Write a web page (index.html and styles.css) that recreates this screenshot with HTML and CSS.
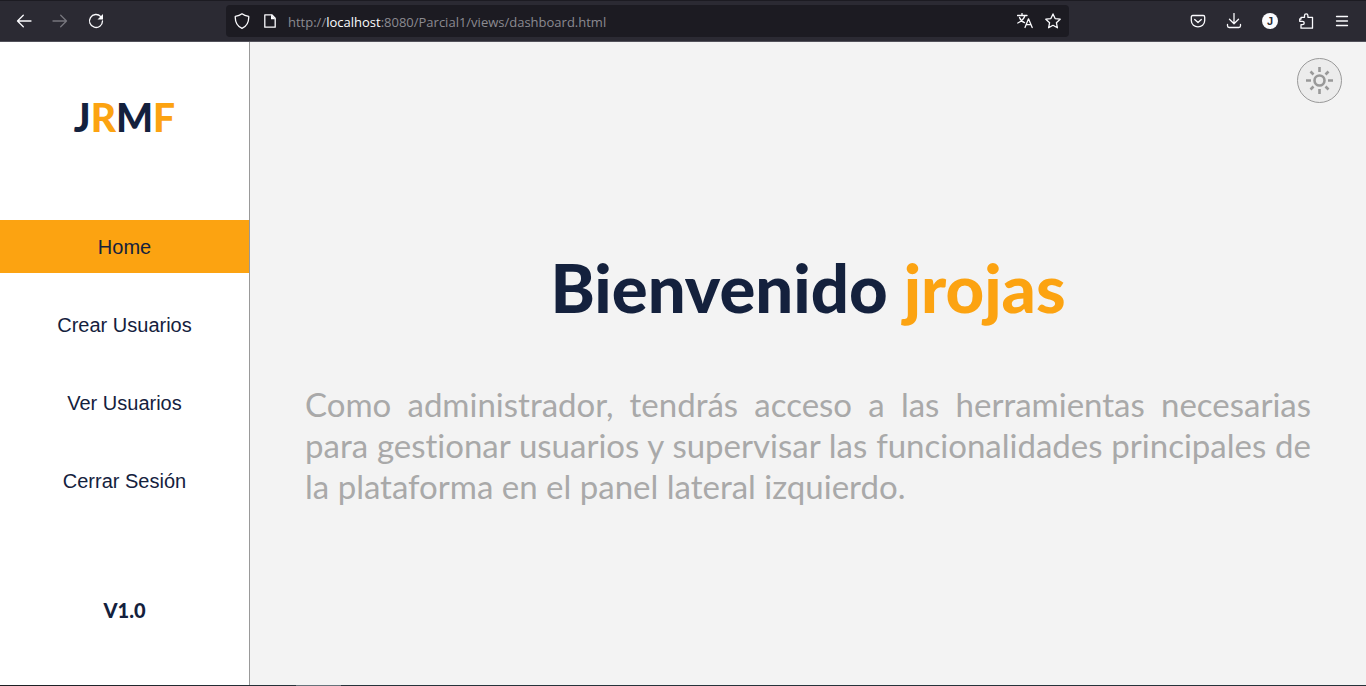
FILE: index.html
```html
<!DOCTYPE html>
<html lang="es">
<head>
<meta charset="utf-8">
<meta name="viewport" content="width=device-width, initial-scale=1">
<title>Dashboard</title>
<link rel="stylesheet" href="styles.css">
</head>
<body>
<header class="toolbar">
  <div class="toolbar-group nav-buttons">
    <button class="tool" type="button" aria-label="Atrás"><svg viewBox="0 0 16 16"><path d="M15 8H1.5M7.300 2.200 1.500 8l5.800 5.800"/></svg></button>
    <button class="tool tool-disabled" type="button" aria-label="Adelante" disabled><svg viewBox="0 0 16 16"><path d="M1 8h13.500M8.700 2.200 14.500 8l-5.800 5.800"/></svg></button>
    <button class="tool" type="button" aria-label="Recargar"><svg viewBox="0 0 16 16"><path d="M12.800 3.600A6.500 6.500 0 1 0 14.500 8"/><path class="solid" d="M15 1v5.500H9.500z"/></svg></button>
  </div>
  <div class="address">
    <button class="tool" type="button" aria-label="Protección"><svg viewBox="0 0 16 16"><path d="M8 .8C6 2.400 3.800 3 1.300 3.300 1 8.500 3 13 8 15.300c5-2.300 7-6.800 6.700-12C12.200 3 10 2.400 8 .8z"/></svg></button>
    <button class="tool" type="button" aria-label="Información del sitio"><svg viewBox="0 0 16 16"><path d="M3.800 1.800h6l3.400 3.400v9H2.800v-12.400z"/><path class="solid" d="M9 1.500v4.700h4.500z"/></svg></button>
    <div class="url" role="textbox" aria-label="Dirección" contenteditable="true" spellcheck="false">http://<span class="host">localhost</span>:8080/Parcial1/views/dashboard.html</div>
    <button class="tool" type="button" aria-label="Traducir"><svg viewBox="0 0 16 16"><path d="M.5 2.500h9.500M5 .5v2M8 2.500C7 6 4 8.500.8 10M2.500 4.500c1 2.500 3 4.500 5 5.200M8 14.500l3.500-8.700 3.700 8.700M9.300 11.700h4.700"/></svg></button>
    <button class="tool" type="button" aria-label="Añadir a marcadores"><svg viewBox="0 0 16 16"><path d="m8 .9 2.100 4.700 5.100.6-3.800 3.500 1 5.100L8 12.300l-4.400 2.500 1-5.100L.8 6.200l5.100-.6z"/></svg></button>
  </div>
  <div class="toolbar-group extras">
    <button class="tool" type="button" aria-label="Pocket"><svg viewBox="0 0 16 16"><path d="M2.800 2.500h10.400q1.500 0 1.500 1.500v3.500c0 8.400-13.400 8.400-13.400 0V4q0-1.500 1.500-1.500z"/><path d="M4.700 6.500 8 9.500l3.300-3"/></svg></button>
    <button class="tool" type="button" aria-label="Descargas"><svg viewBox="0 0 16 16"><path d="M8 .5v10.300M3.500 6.300 8 10.800l4.500-4.500M1.500 11.500v1.300q0 1.700 1.700 1.700h9.600q1.700 0 1.700-1.700v-1.300"/></svg></button>
    <button class="tool account" type="button" aria-label="Cuenta">J</button>
    <button class="tool" type="button" aria-label="Extensiones"><svg viewBox="0 0 16 16"><path d="M3 6V4.300h3.500V2.500a1.700 1.700 0 0 1 3.400 0v1.800h4.600v10.900H3v-3.500h1.500a1.700 1.700 0 0 0 0-3.400H1.700V6z"/></svg></button>
    <button class="tool" type="button" aria-label="Menú"><svg viewBox="0 0 16 16"><path d="M2.500 3.500h11M2.500 8h11M2.500 12.500h11"/></svg></button>
  </div>
</header>
<div class="page">
  <aside class="sidebar">
    <div class="logo">J<span class="accent">R</span>M<span class="accent">F</span></div>
    <nav class="menu">
      <a class="menu-item active" href="#home" aria-current="page">Home</a>
      <a class="menu-item" href="#crear">Crear Usuarios</a>
      <a class="menu-item" href="#ver">Ver Usuarios</a>
      <a class="menu-item" href="#salir">Cerrar Sesión</a>
    </nav>
    <p class="version">V1.0</p>
  </aside>
  <main class="content">
    <button class="theme" type="button" aria-label="Cambiar tema"><svg viewBox="0 0 27 27"><circle cx="13.500" cy="13.500" r="5"/><path d="M13.500 0v5M13.500 22v5M0 13.500h5M22 13.500h5M4.500 4.500l3 3M19.500 19.500l3 3M4.500 22.500l3-3M19.500 7.500l3-3"/></svg></button>
    <h1 class="title">Bienvenido <span class="accent">jrojas</span></h1>
    <p class="intro">Como administrador, tendrás acceso a las herramientas necesarias para gestionar usuarios y supervisar las funcionalidades principales de la plataforma en el panel lateral izquierdo.</p>
  </main>
</div>
<footer class="taskbar"></footer>
</body>
</html>
```
FILE: styles.css
```css
* { box-sizing: border-box; }

body {
  margin: 0;
  min-height: 100vh;
  display: flex;
  flex-direction: column;
  font-family: "Gill Sans", "Gill Sans MT", Lato, sans-serif;
  font-variant-ligatures: none;
  color: #14213d;
}

.toolbar {
  display: grid;
  grid-template-columns: 210px minmax(0, 843px) 1fr;
  column-gap: 16px;
  align-items: center;
  height: 42px;
  background: #2b2a33;
  border-top: 1px solid #1c1b22;
  border-bottom: 1px solid #52515a;
  color: #fbfbfe;
  font-family: "Segoe UI", "Open Sans", sans-serif;
}

.toolbar-group { display: flex; gap: 20px; }
.nav-buttons { padding-left: 16px; }
.extras { justify-content: flex-end; padding-right: 16px; }

.tool {
  flex: none;
  display: block;
  width: 16px;
  height: 16px;
  padding: 0;
  border: 0;
  background: none;
  color: inherit;
}
.tool svg { display: block; width: 16px; height: 16px; fill: none; stroke: currentColor; stroke-width: 1.3; stroke-linejoin: round; stroke-linecap: round; }
.tool svg .solid { fill: currentColor; stroke-width: 0; }
.tool-disabled { color: #77767e; }

.account {
  border-radius: 50%;
  background: #fbfbfe;
  color: #2b2a33;
  font: bold 11px/16px "Liberation Sans", sans-serif;
  text-align: center;
}

.address {
  display: flex;
  align-items: center;
  gap: 12px;
  height: 32px;
  padding: 0 8px;
  border-radius: 4px;
  background: #1c1b22;
}
.url {
  flex: 1;
  min-width: 0;
  margin-left: -2px;
  overflow: hidden;
  white-space: nowrap;
  font-size: 13px;
  line-height: 20px;
  padding-top: 2px;
  color: #8b8a91;
  outline: 0;
}
.host { color: #fbfbfe; }

.page {
  flex: 1;
  display: grid;
  grid-template-columns: 250px 1fr;
}

.sidebar {
  display: flex;
  flex-direction: column;
  background: #fff;
  border-right: 1px solid #999;
  text-align: center;
}
.logo {
  padding: 51px 0 79px;
  font-size: 39px;
  line-height: 48px;
  font-weight: 900;
}
.accent { color: #fca311; }

.menu { display: flex; flex-direction: column; gap: 25px; }
.menu-item {
  padding: 16px 0 14px;
  font: 20px/23px Arial, "Liberation Sans", sans-serif;
  color: #14213d;
  text-decoration: none;
}
.active { background: #fca311; }

.version {
  margin: 91px 0 0;
  font-size: 20px;
  line-height: 24px;
  font-weight: 900;
}

.content {
  position: relative;
  display: flex;
  flex-direction: column;
  justify-content: center;
  gap: 60px;
  padding: 30px 55px 0;
  background: #f3f3f3;
}
.title {
  margin: 0;
  font-size: 67px;
  line-height: 74px;
  font-weight: 900;
  text-align: center;
}
.intro {
  margin: 0;
  font-size: 33px;
  line-height: 41px;
  color: #a9a9a9;
  text-align: justify;
}
.theme {
  position: absolute;
  top: 16px;
  right: 24px;
  display: grid;
  place-items: center;
  width: 45px;
  height: 45px;
  padding: 0;
  border: 1px solid #999;
  border-radius: 50%;
  background: #ececec;
}
.theme svg { width: 27px; height: 27px; fill: none; stroke: #999; stroke-width: 2.6; }

.taskbar { height: 1px; background: linear-gradient(90deg, #1c1e22, #26323a 296px, #66727a 296px, #66727a 341px, #26323a 341px); }
```
